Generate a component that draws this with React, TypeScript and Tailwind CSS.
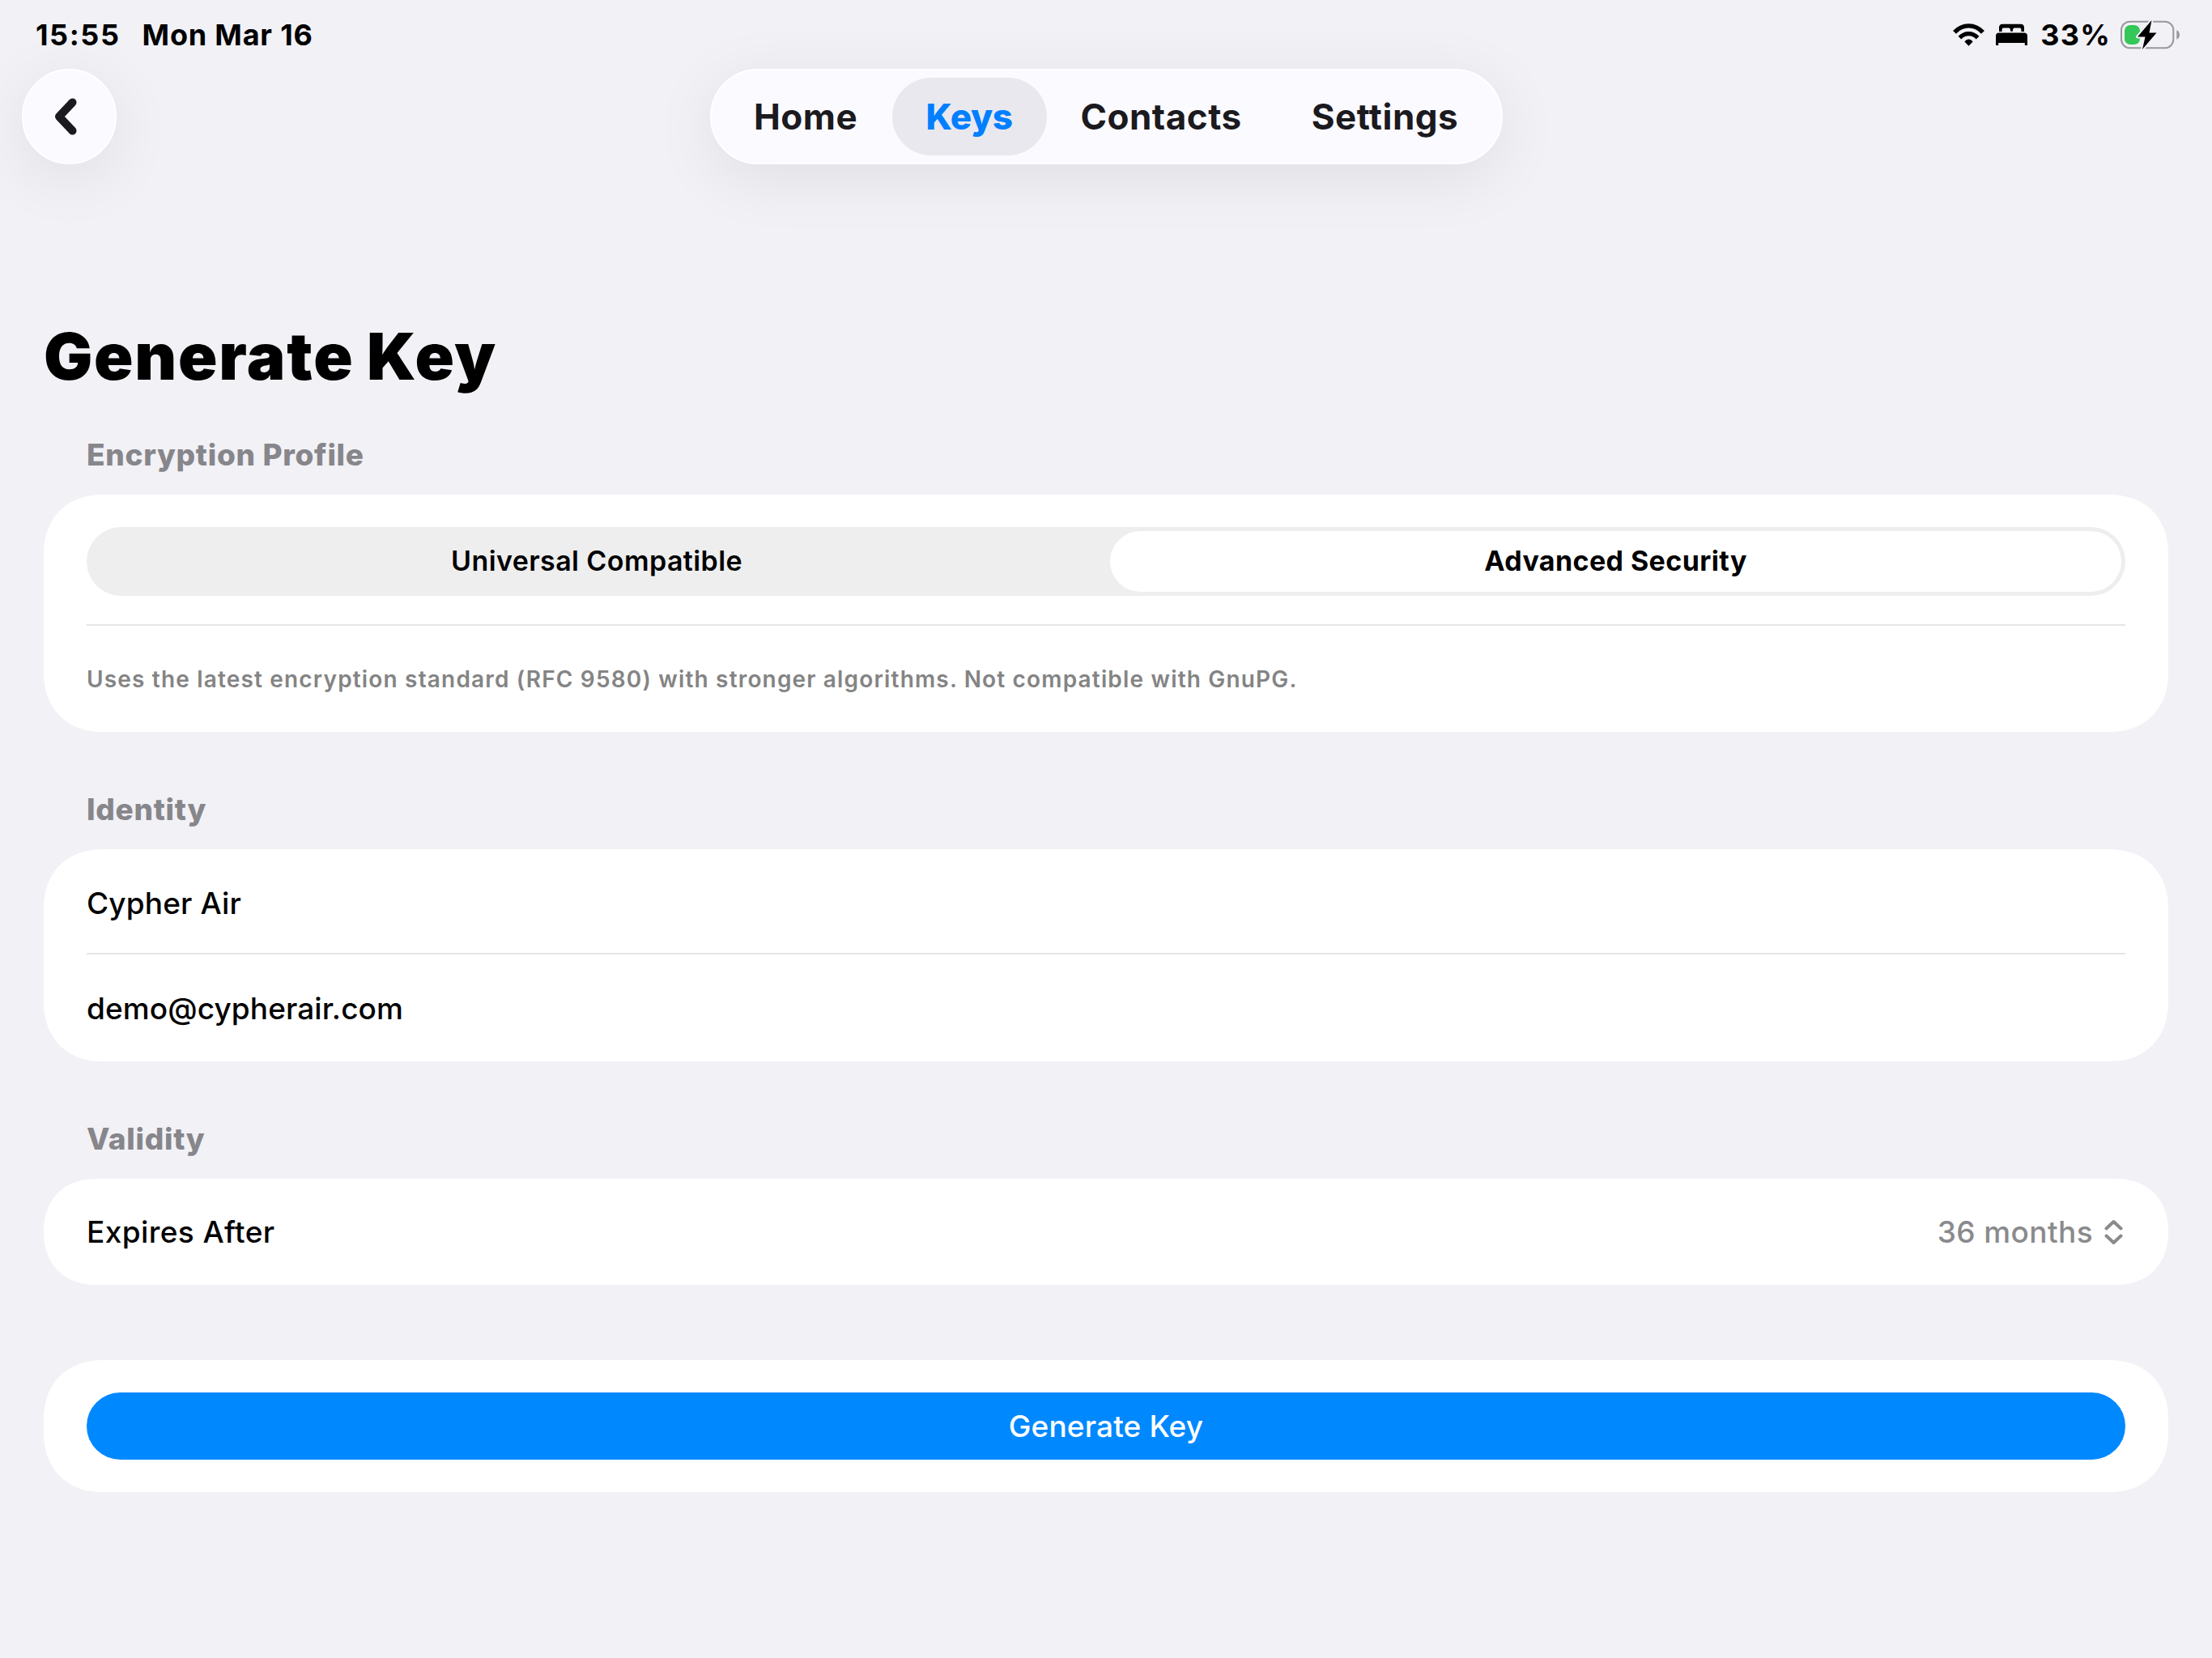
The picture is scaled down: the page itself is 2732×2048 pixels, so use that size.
import { useState } from "react";

interface CardProps {
  children: React.ReactNode;
  className?: string;
}

const tabs = [
  { name: "Home", width: "w-[191px]" },
  { name: "Keys", width: "w-[191px]" },
  { name: "Contacts", width: "w-[283px]" },
  { name: "Settings", width: "w-[270px]" },
];

const profiles = ["Universal Compatible", "Advanced Security"];

function WifiIcon() {
  return (
    <svg className="h-[28px] w-[39px]" viewBox="0 0 39 28" fill="none">
      <path d="M2 10.8C12 0.2 27 0.2 37 10.8" stroke="black" strokeWidth="5.4" />
      <path d="M8.4 17.6C15 11 24 11 30.6 17.6" stroke="black" strokeWidth="5.2" />
      <path d="M19.5 27.7L14.4 22.6C17 18.6 22 18.6 24.6 22.6Z" fill="black" />
    </svg>
  );
}

function BedIcon() {
  return (
    <svg className="h-[28px] w-[39px]" viewBox="0 0 39 28" fill="black">
      <path d="M4 10V5Q4 0.7 8.5 0.7H30.5Q35 0.7 35 5V10H31.4V7.5Q31.4 5.6 29.5 5.6H23Q21 5.6 20.8 9.7H18.2Q18 5.6 16 5.6H9.5Q7.6 5.6 7.6 7.5V10Z" />
      <path d="M0 27V15.5Q0 11.5 4 11.5H35Q39 11.5 39 15.5V27H35.8V24H3.2V27Z" />
    </svg>
  );
}

function BatteryIcon() {
  return (
    <svg className="h-[38px] w-[74px]" viewBox="0 0 74 38">
      <rect x="1" y="2.7" width="64.3" height="32.6" rx="10.5" fill="none" stroke="#98989d" strokeWidth="2" />
      <path d="M69.3 13.2Q73 15 73 19Q73 23 69.3 24.8Z" fill="#98989d" />
      <rect x="5" y="7" width="19" height="24" rx="7" fill="#34c759" />
      <path
        d="M38.5 1L21 21.5H30.5L27 37L44.5 16.5H35.5Z"
        fill="black"
        stroke="#f2f1f6"
        strokeWidth="4"
        strokeLinejoin="round"
        paintOrder="stroke"
      />
    </svg>
  );
}

function Card({ children, className = "" }: CardProps) {
  return (
    <div className={`rounded-[74px] bg-white px-[53px] [corner-shape:superellipse(1.15)] ${className}`}>
      {children}
    </div>
  );
}

function SectionTitle({ children }: { children: React.ReactNode }) {
  return (
    <h2 className="pl-[53px] text-[37px] leading-[44px] font-extrabold tracking-[0.7px] text-[#86868b]">
      {children}
    </h2>
  );
}

export default function App() {
  const [activeTab, setActiveTab] = useState("Keys");
  const [profile, setProfile] = useState("Advanced Security");

  return (
    <div className="h-[2048px] w-[2732px] overflow-hidden bg-[#f2f1f6] font-['Inter',sans-serif] text-black">
      {/* Status bar */}
      <div className="flex h-[85px] items-start justify-between pr-[39px] pl-[44px] text-[36px] leading-[44px] font-bold">
        <div className="flex gap-[27px] pt-[21px]">
          <span className="tracking-[1.6px]">15:55</span>
          <span className="tracking-[0.8px]">Mon Mar 16</span>
        </div>
        <div className="flex items-center pt-[21px]">
          <WifiIcon />
          <div className="w-[14px]" />
          <BedIcon />
          <span className="ml-[16px] tracking-[1.2px]">33%</span>
          <div className="ml-[12px]">
            <BatteryIcon />
          </div>
        </div>
      </div>

      {/* Navigation */}
      <div className="grid h-[118px] grid-cols-[1fr_979px_1fr]">
        <button className="ml-[27px] flex h-[118px] w-[117px] items-center justify-center rounded-full border-2 border-white bg-[#fbfaff] shadow-[0_16px_80px_rgba(0,0,0,0.08)]">
          <svg className="mr-[9px] h-[46px] w-[28px]" viewBox="0 0 28 46" fill="none">
            <path d="M22.5 5.5L6 23L22.5 40.5" stroke="#1b1a1f" strokeWidth="10" strokeLinecap="round" strokeLinejoin="round" />
          </svg>
        </button>
        <nav className="flex items-center rounded-full border-2 border-white bg-[#fbfaff] pl-[21px] shadow-[0_16px_80px_rgba(0,0,0,0.08)]">
          {tabs.map((tab) => (
            <button
              key={tab.name}
              onClick={() => setActiveTab(tab.name)}
              className={`h-[96px] rounded-full text-[44px] leading-[96px] first:mr-[11px] ${tab.width} ${
                activeTab === tab.name
                  ? "bg-[#e9e8ee] font-extrabold tracking-[-0.4px] text-[#007fff]"
                  : "font-bold tracking-[0.5px] text-[#1b1a1f]"
              }`}
            >
              {tab.name}
            </button>
          ))}
        </nav>
      </div>

      <main className="px-[54px] pt-[188px]">
        <h1 className="text-[80px] leading-[97px] font-black tracking-[1.75px] [word-spacing:-2px]">
          Generate Key
        </h1>

        {/* Encryption profile */}
        <section className="pt-[52px]">
          <SectionTitle>Encryption Profile</SectionTitle>
          <Card className="mt-[27px] h-[293px] pt-[40px]">
            <div className="grid h-[85px] grid-cols-[1259px_1249px] rounded-full bg-[#eeeeee] p-[5px]">
              {profiles.map((name) => (
                <button
                  key={name}
                  onClick={() => setProfile(name)}
                  className={`rounded-full text-[34px] leading-[73px] pb-[2px] first:pr-[9px] ${
                    profile === name ? "bg-white font-bold tracking-[0.4px]" : "font-semibold tracking-[0.4px]"
                  }`}
                >
                  {name}
                </button>
              ))}
            </div>
            <div className="mt-[35px] h-[2px] bg-[#e6e6e6]" />
            <p className="text-[28px] leading-[132px] font-semibold tracking-[1.17px] text-[#848484]">
              Uses the latest encryption standard (RFC 9580) with stronger algorithms. Not compatible with GnuPG.
            </p>
          </Card>
        </section>

        {/* Identity */}
        <section className="pt-[74px]">
          <SectionTitle>Identity</SectionTitle>
          <Card className="mt-[27px] h-[262px]">
            <div className="h-[130px] border-b-2 border-[#e6e6e6] text-[37px] leading-[133px] font-medium tracking-[0.15px]">
              Cypher Air
            </div>
            <div className="h-[132px] text-[37px] leading-[134px] font-medium tracking-[0.1px]">
              demo@cypherair.com
            </div>
          </Card>
        </section>

        {/* Validity */}
        <section className="pt-[74px]">
          <SectionTitle>Validity</SectionTitle>
          <Card className="mt-[27px] flex h-[131px] items-center justify-between text-[37px] font-medium">
            <span className="tracking-[0.4px]">Expires After</span>
            <div className="flex items-center text-[#8a8a8c]">
              <span className="tracking-[0.4px]">36 months</span>
              <svg className="mr-[3px] ml-[14px] h-[32px] w-[23px]" viewBox="0 0 23 32" fill="none">
                <path
                  d="M2.5 11.5L11.5 3L20.5 11.5M2.5 20.5L11.5 29L20.5 20.5"
                  stroke="currentColor"
                  strokeWidth="4"
                  strokeLinecap="round"
                  strokeLinejoin="round"
                />
              </svg>
            </div>
          </Card>
        </section>

        <Card className="mt-[93px] h-[163px] pt-[40px]">
          <button className="h-[83px] w-full rounded-full bg-[#0088ff] text-[37px] font-medium tracking-[0.15px] text-white">
            Generate Key
          </button>
        </Card>
      </main>
    </div>
  );
}
